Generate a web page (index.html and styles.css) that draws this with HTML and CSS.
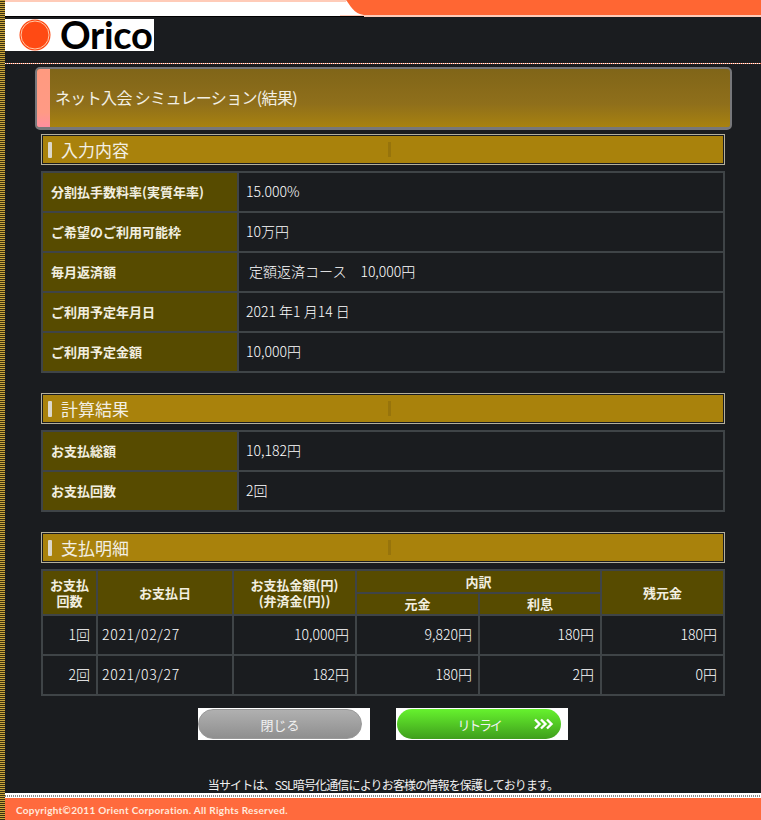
FILE: index.html
```html
<!DOCTYPE html>
<html lang="ja">

<head>
    <meta charset="UTF-8">
    <title>ネット入会 シミュレーション(結果)</title>
    <link rel="stylesheet" href="styles.css">
</head>

<body>
    <div class="page">
        <div class="top-bar">
            <div class="top-left"></div>
            <svg class="top-curve" width="24" height="17" viewBox="0 0 24 17">
                <rect width="24" height="17" fill="#ff6633" />
                <path d="M0 0H6C10 5 14 14 24 15V16H0Z" fill="#fff" />
                <path d="M0 0H6V2H0Z" fill="#ffcbb8" />
                <rect y="15" width="24" height="1" fill="#ffcbb8" />
                <rect y="16" width="24" height="1" fill="#000" />
            </svg>
            <div class="top-right"></div>
        </div>
        <div class="logo-row">
            <div class="logo">
                <svg class="logo-mark" width="34" height="32" viewBox="0 0 34 32">
                    <circle cx="16" cy="16" r="15.5" fill="#ff4a14" />
                    <circle cx="16" cy="16" r="14" fill="none" stroke="#ffc9a8" stroke-width="1" />
                </svg>
                <span class="logo-text">Orico</span>
            </div>
        </div>
        <div class="dots"></div>

        <div class="content">
            <div class="title-bar">
                <span class="title-tab"></span>
                <h1>ネット入会 シミュレーション(結果)</h1>
            </div>

            <div class="section">
                <h2><span class="mark"></span>入力内容</h2>
                <table class="info">
                    <tr>
                        <th>分割払手数料率(実質年率)</th>
                        <td>15.000%</td>
                    </tr>
                    <tr>
                        <th>ご希望のご利用可能枠</th>
                        <td>10万円</td>
                    </tr>
                    <tr>
                        <th>毎月返済額</th>
                        <td>&nbsp;定額返済コース　10,000円</td>
                    </tr>
                    <tr>
                        <th>ご利用予定年月日</th>
                        <td>2021 年1 月14 日</td>
                    </tr>
                    <tr>
                        <th>ご利用予定金額</th>
                        <td>10,000円</td>
                    </tr>
                </table>
            </div>

            <div class="section">
                <h2><span class="mark"></span>計算結果</h2>
                <table class="info">
                    <tr>
                        <th>お支払総額</th>
                        <td>10,182円</td>
                    </tr>
                    <tr>
                        <th>お支払回数</th>
                        <td>2回</td>
                    </tr>
                </table>
            </div>

            <div class="section">
                <h2><span class="mark"></span>支払明細</h2>
                <table class="detail">
                    <colgroup>
                        <col class="col-no">
                        <col class="col-date">
                        <col class="col-pay">
                        <col class="col-sub">
                        <col class="col-sub2">
                        <col>
                    </colgroup>
                    <tr class="head-top">
                        <th rowspan="2">お支払<br>回数</th>
                        <th rowspan="2">お支払日</th>
                        <th rowspan="2">お支払金額(円)<br>(弁済金(円))</th>
                        <th colspan="2">内訳</th>
                        <th rowspan="2">残元金</th>
                    </tr>
                    <tr class="head-sub">
                        <th>元金</th>
                        <th>利息</th>
                    </tr>
                    <tr>
                        <td>1回</td>
                        <td class="date">2021/02/27</td>
                        <td>10,000円</td>
                        <td>9,820円</td>
                        <td>180円</td>
                        <td>180円</td>
                    </tr>
                    <tr>
                        <td>2回</td>
                        <td class="date">2021/03/27</td>
                        <td>182円</td>
                        <td>180円</td>
                        <td>2円</td>
                        <td>0円</td>
                    </tr>
                </table>
            </div>

            <div class="buttons">
                <div class="btn-box">
                    <a class="btn btn-close">閉じる</a>
                </div>
                <div class="btn-box btn-box-retry">
                    <a class="btn btn-retry"><span class="retry-label">リトライ</span>
                        <svg class="chevrons" width="20" height="12" viewBox="0 0 20 12">
                            <path d="M1 1.5L5.5 6L1 10.5M7 1.5L11.5 6L7 10.5M13 1.5L17.5 6L13 10.5" fill="none" stroke="#fff" stroke-width="2.4" />
                        </svg>
                    </a>
                </div>
            </div>

            <p class="note">当サイトは、SSL暗号化通信によりお客様の情報を保護しております。</p>
        </div>

        <div class="footer">
            <div class="footer-dots"></div>
            <div class="footer-text">Copyright©2011 Orient Corporation. All Rights Reserved.</div>
        </div>
    </div>
</body>

</html>
```

FILE: styles.css
```css
* {
    margin: 0;
    padding: 0;
    box-sizing: border-box;
    font-family: 'Noto Sans CJK JP', 'Noto Sans', sans-serif;
}

html,
body {
    height: 820px;
    overflow: hidden;
}

body {
    background-color: #1a1c1f;
    background-image: repeating-linear-gradient(180deg, #c9a53c 0, #c9a53c 1px, #3a3010 1px, #3a3010 2px);
    background-size: 5px 100%;
    background-repeat: no-repeat;
    color: #fff;
    font-size: 12px;
}

.page {
    margin-left: 5px;
    height: 820px;
    background-color: #1a1c1f;
    display: flex;
    flex-direction: column;
}

.top-bar {
    display: flex;
    height: 17px;
}

.top-left {
    width: 335px;
    background-color: #fff;
    border-top: 2px solid #ffcbb8;
    border-bottom: 1px solid #000;
}

.top-right {
    flex: 1;
    background-color: #ff6633;
    border-bottom: 2px solid #ffcbb8;
}

.logo-row {
    height: 46px;
    padding-top: 2px;
    background-color: #1a1c1f;
}

.logo {
    display: flex;
    align-items: center;
    width: 149px;
    height: 32px;
    padding-left: 14px;
    background-color: #fff;
}

.logo-mark {
    flex-shrink: 0;
}

.logo-text {
    margin: 0 0 2px 7px;
    font-family: 'Lato', sans-serif;
    font-size: 38px;
    font-weight: bold;
    line-height: 32px;
    letter-spacing: -0.3px;
    color: #000;
}

.dots {
    height: 1px;
    background-image: repeating-linear-gradient(90deg, #fff 0, #fff 1px, #e8704a 1px, #e8704a 2px);
}

.content {
    flex: 1;
    padding: 3px 36px 0 30px;
}

.title-bar {
    display: flex;
    align-items: center;
    width: 697px;
    height: 63px;
    border: 2px solid #77777a;
    border-bottom-width: 3px;
    border-radius: 5px;
    overflow: hidden;
    background: linear-gradient(180deg, #806518 0%, #8f6f1b 60%, #a8820f 100%);
}

.title-tab {
    width: 13px;
    height: 100%;
    background: linear-gradient(180deg, #ff9a7f 0%, #ff9a85 75%, #ff8f9f 100%);
}

h1 {
    margin: 0 0 2px 5px;
    font-size: 16px;
    font-weight: normal;
    letter-spacing: -0.65px;
    color: #f2efe4;
}

.section {
    margin: 4px 0 20px 6px;
    width: 684px;
}

.section+.section {
    margin-top: 0;
}

h2 {
    display: flex;
    align-items: center;
    height: 31px;
    padding-left: 6px;
    margin-bottom: 6px;
    font-size: 17px;
    font-weight: normal;
    color: #f2efe4;
    background-color: #a9820c;
    background-image: linear-gradient(#97740c, #97740c);
    background-position: 346px center;
    background-size: 3px 15px;
    background-repeat: no-repeat;
    border: 1px solid #b5b09c;
    outline: 1px solid #1a1c1f;
    outline-offset: -2px;
}

.mark {
    width: 4px;
    height: 16px;
    margin-right: 9px;
    border-radius: 1px;
    background-color: #dcd8cc;
}

table {
    width: 684px;
    border-collapse: collapse;
    table-layout: fixed;
}

th,
td {
    border: 2px solid #3f4447;
}

th {
    background-color: #574b00;
    color: #f2efe0;
    font-weight: bold;
}

.info tr {
    height: 40px;
}

.info th {
    width: 196px;
    padding: 0 0 2px 8px;
    text-align: left;
    font-size: 13px;
}

.info td {
    padding: 0 0 2px 7px;
    font-size: 14px;
    font-weight: 300;
}

.detail th {
    font-size: 13px;
    line-height: 16px;
}

.detail td {
    height: 40px;
    padding: 0 6px 2px 0;
    text-align: right;
    font-size: 14px;
    font-weight: 300;
}

.detail td.date {
    padding-left: 4px;
    text-align: left;
    letter-spacing: 0.7px;
}

.head-top {
    height: 23px;
}

.head-sub {
    height: 22px;
}

.col-no {
    width: 55px;
}

.col-date {
    width: 136px;
}

.col-pay,
.col-sub {
    width: 123px;
}

.col-sub2 {
    width: 122px;
}

.buttons {
    display: flex;
    gap: 26px;
    margin: -8px 0 0 163px;
}

.btn-box {
    display: flex;
    align-items: center;
    width: 172px;
    height: 32px;
    background-color: #fff;
}

.btn-box-retry {
    padding-left: 1px;
}

.btn {
    display: flex;
    align-items: center;
    justify-content: center;
    position: relative;
    width: 164px;
    height: 30px;
    border-radius: 15px;
    font-size: 13px;
    color: #f2f2f2;
}

.btn-close {
    background: linear-gradient(180deg, #b0b0b0 0%, #8f8f8f 100%);
    border: 1px solid #999;
}

.btn-retry {
    background: linear-gradient(180deg, #66f22e 0%, #3f9e1c 100%);
}

.retry-label {
    letter-spacing: -2.3px;
}

.chevrons {
    position: absolute;
    right: 7px;
    top: 9px;
}

.note {
    margin-top: 37px;
    padding-left: 6px;
    text-align: center;
    font-size: 12px;
    line-height: 16px;
    letter-spacing: -0.85px;
    color: #f0f0f0;
}

.footer {
    height: 27px;
    border-top: 2px solid #fff;
    background-color: #ff6a3d;
}

.footer-dots {
    height: 3px;
    border-bottom: 1px solid #fff;
    background-image: repeating-linear-gradient(90deg, #8a8a8a 0, #8a8a8a 1px, #fff 1px, #fff 2px);
}

.footer-text {
    padding: 5px 0 0 11px;
    font-family: 'Lato', sans-serif;
    font-size: 10px;
    font-weight: bold;
    letter-spacing: 0.3px;
    line-height: 14px;
    color: #ffe9dc;
}
```
